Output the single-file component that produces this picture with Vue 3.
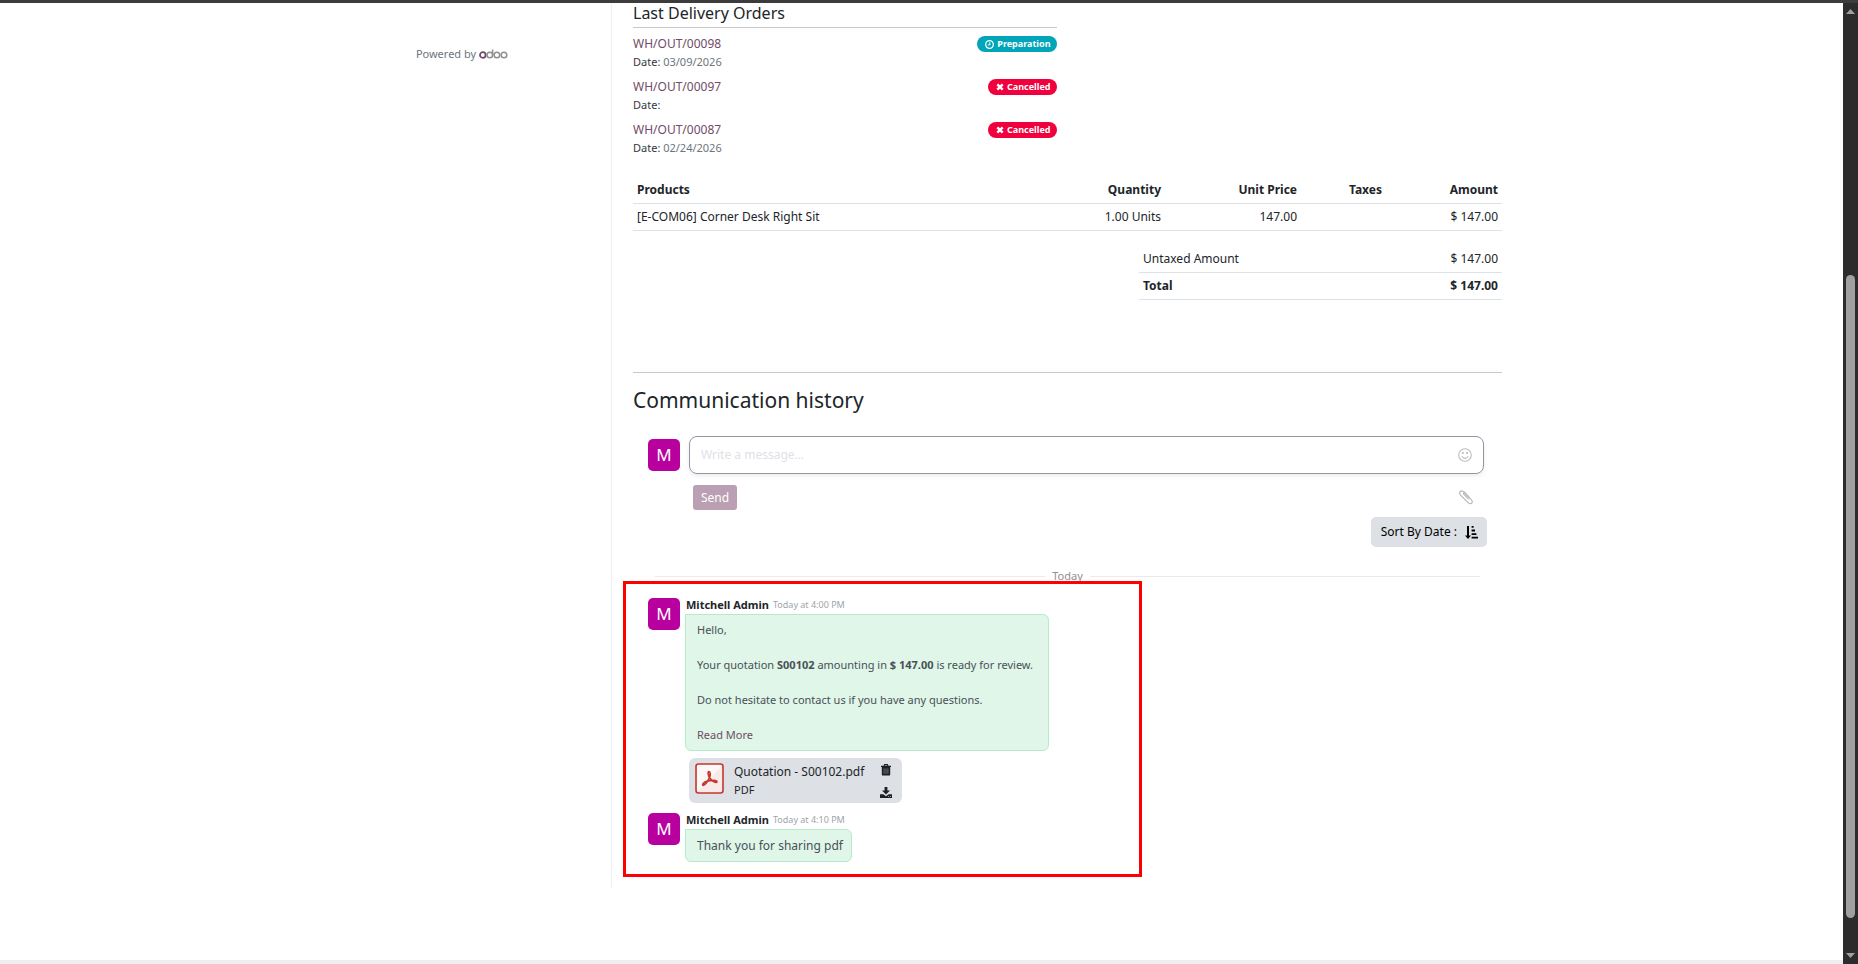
<script setup>
const deliveries = [
  { name: 'WH/OUT/00098', date: '03/09/2026', state: 'Preparation' },
  { name: 'WH/OUT/00097', date: '', state: 'Cancelled' },
  { name: 'WH/OUT/00087', date: '02/24/2026', state: 'Cancelled' },
]
</script>

<template>
  <div class="window">
    <div class="topbar"></div>
    <div class="viewport">
      <div class="page">
        <div class="layout">
          <aside class="sidebar">
            <p class="powered">
              Powered by
              <a href="#" aria-label="Odoo">
                <svg width="29" height="10" viewBox="0 0 29 10" fill="none" stroke-width="1.5">
                  <circle cx="3.8" cy="6" r="2.8" stroke="#714b67" stroke-width="1.8" />
                  <g stroke="#8f8f8f">
                    <circle cx="10.8" cy="6" r="2.8" />
                    <path d="M13.6 0.5V6" />
                    <circle cx="17.9" cy="6" r="2.8" />
                    <circle cx="25" cy="6" r="2.8" />
                  </g>
                </svg>
              </a>
            </p>
          </aside>

          <main class="main">
            <section class="deliveries">
              <h2>Last Delivery Orders</h2>
              <ul>
                <li v-for="d in deliveries" :key="d.name">
                  <div>
                    <a href="#">{{ d.name }}</a>
                    <p>Date: <span>{{ d.date }}</span></p>
                  </div>
                  <span class="badge" :class="d.state === 'Preparation' ? 'info' : 'danger'">
                    <svg v-if="d.state === 'Preparation'" width="9" height="9" viewBox="0 0 9 9" fill="none" stroke="#fff">
                      <circle cx="4.5" cy="4.5" r="3.8" stroke-width="1.3" />
                      <path d="M4.8 2.2V4.9H2.8" />
                    </svg>
                    <svg v-else width="8" height="8" viewBox="0 0 8 8" stroke="#fff" stroke-width="2.4">
                      <path d="M1.3 1.3L6.7 6.7M6.7 1.3L1.3 6.7" />
                    </svg>
                    {{ d.state }}
                  </span>
                </li>
              </ul>
            </section>

            <table class="products">
              <thead>
                <tr><th>Products</th><th class="qty">Quantity</th><th class="price">Unit Price</th><th class="tax">Taxes</th><th class="amount">Amount</th></tr>
              </thead>
              <tbody>
                <tr><td>[E-COM06] Corner Desk Right Sit</td><td>1.00 Units</td><td>147.00</td><td></td><td>$ 147.00</td></tr>
              </tbody>
            </table>

            <table class="totals">
              <tbody>
                <tr><td>Untaxed Amount</td><td>$ 147.00</td></tr>
                <tr><th>Total</th><th>$ 147.00</th></tr>
              </tbody>
            </table>

            <section class="history">
              <h1>Communication history</h1>
              <form class="composer" @submit.prevent>
                <span class="avatar">M</span>
                <div class="field">
                  <input type="text" aria-label="Message" placeholder="Write a message…" />
                  <button type="button" aria-label="Add emoji">
                    <svg width="14" height="14" viewBox="0 0 14 14" fill="none" stroke="#bcbcbc" stroke-width="1.1">
                      <circle cx="7" cy="7" r="6.3" />
                      <path d="M4 8.3Q4.8 10.4 7 10.4T10 8.3" />
                      <circle cx="4.9" cy="5" r="0.5" fill="#bcbcbc" />
                      <circle cx="9.1" cy="5" r="0.5" fill="#bcbcbc" />
                    </svg>
                  </button>
                </div>
              </form>
              <div class="actions">
                <button type="button" class="send">Send</button>
                <button type="button" class="attach" aria-label="Attach files">
                  <svg width="14" height="15" viewBox="0 0 14 15" fill="none" stroke="#b4b4b4" stroke-width="1.1" stroke-linecap="round">
                    <path d="M9.4 8.8L4.7 4.2C3.9 3.4 4.9 2.4 5.8 3.2L12 9.4C13.3 10.7 13.6 12.2 12.7 13.2S10.3 13.9 9.1 12.7L1.8 5.3C0.6 4.1 0.3 2.5 1.3 1.5S4 0.8 5.2 2L10.4 7.3" />
                  </svg>
                </button>
              </div>
              <div class="sort-row">
                <button type="button" class="sort">
                  Sort By Date :
                  <svg width="13" height="13" viewBox="0 0 13 13" fill="#000">
                    <path d="M2 0H4V9.5H6L3 13L0 9.5H2ZM6.6 0H8.6V1.8H6.6ZM6.6 3.6H10V5.4H6.6ZM6.6 7.2H11.4V9H6.6ZM6.6 10.8H13V12.6H6.6Z" />
                  </svg>
                </button>
              </div>
              <div class="day"><span>Today</span></div>

              <div class="thread">
                <div class="highlight"></div>
                <article class="message">
                  <span class="avatar">M</span>
                  <div>
                    <header><strong>Mitchell Admin</strong><time>Today at 4:00 PM</time></header>
                    <div class="bubble">
                      <p>Hello,</p>
                      <p>Your quotation <b>S00102</b> amounting in <b>$ 147.00</b> is ready for review.</p>
                      <p>Do not hesitate to contact us if you have any questions.</p>
                      <p><a href="#">Read More</a></p>
                    </div>
                    <div class="file">
                      <svg width="29" height="31" viewBox="0 0 29 31" fill="none" stroke="#c4382d">
                        <rect x="1" y="1" width="27" height="29" rx="2.5" fill="#f9e9e9" stroke="none" />
                        <path d="M2 29V2H27V3Z" fill="#fdf8f8" stroke="none" />
                        <rect x="1" y="1" width="27" height="29" rx="2.5" stroke-width="1.6" />
                        <path d="M14.5 14.7C12.9 11.5 12.7 8.7 14 8.7S15.8 11.4 14.4 14.7C13 18.2 10 22.4 8.3 22.3S8.4 19.1 12.3 18.1C15.6 17.2 21.8 16.7 21.9 18.5S17.6 19.4 14.5 14.7Z" stroke-width="1.7" />
                      </svg>
                      <div class="file-name"><span>Quotation - S00102.pdf</span><small>PDF</small></div>
                      <div class="file-actions">
                        <button type="button" aria-label="Delete">
                          <svg width="10" height="12" viewBox="0 0 10 12">
                            <path d="M3 2.2L3.6 0.6H6.4L7 2.2" fill="none" stroke="#1d2126" stroke-width="1.1" />
                            <path d="M0 1.8H10V3H9.2V10.4Q9.2 11.6 8 11.6H2Q0.8 11.6 0.8 10.4V3H0Z" fill="#1d2126" />
                            <path d="M3.1 4.4V9.8M5 4.4V9.8M6.9 4.4V9.8" stroke="#8b9096" stroke-width="0.7" />
                          </svg>
                        </button>
                        <button type="button" aria-label="Download">
                          <svg width="12" height="11" viewBox="0 0 12 11" fill="#1d2126">
                            <path d="M4.6 0H7.4V3.4H10L6 7.4L2 3.4H4.6Z" />
                            <path d="M0 7.2H3.4L6 9.2L8.6 7.2H12V11H0Z" />
                            <path d="M8.2 9.2H9.1V10H8.2ZM10 9.2H10.9V10H10Z" fill="#dde1e6" />
                          </svg>
                        </button>
                      </div>
                    </div>
                  </div>
                </article>
                <article class="message">
                  <span class="avatar">M</span>
                  <div>
                    <header><strong>Mitchell Admin</strong><time>Today at 4:10 PM</time></header>
                    <div class="bubble large"><p>Thank you for sharing pdf</p></div>
                  </div>
                </article>
              </div>
            </section>
          </main>
        </div>
        <div class="footer-edge"></div>
      </div>
      <div class="scrollbar">
        <svg width="9" height="5" viewBox="0 0 9 5" fill="#a0a0a0"><path d="M0 5L4.5 0L9 5Z" /></svg>
        <div class="track"><div class="thumb"></div></div>
        <svg width="9" height="5" viewBox="0 0 9 5" fill="#a0a0a0"><path d="M0 0L4.5 5L9 0Z" /></svg>
      </div>
    </div>
  </div>
</template>

<style>
body { margin: 0; background: #fff; }
</style>

<style scoped>
* { box-sizing: border-box; }
h1, h2, p, ul { margin: 0; padding: 0; font-weight: 400; }
ul { list-style: none; }
button { border: 0; background: none; padding: 0; font: inherit; display: flex; align-items: center; }
svg { display: block; flex: none; }
a { color: #714b67; text-decoration: none; }
.window { min-height: 100vh; display: flex; flex-direction: column; font: 12px/20px "Noto Sans", "Open Sans", sans-serif; color: #212529; }
.topbar { height: 3px; background: #3c3c3c; }
.viewport { flex: 1; display: flex; }
.page { flex: 1; display: flex; flex-direction: column; }
.layout { flex: 1; width: 100%; max-width: 1161px; margin: 0 auto; display: grid; grid-template-columns: 270px 1fr; align-content: start; }
.sidebar { padding: 41px 28px 0 0; }
.powered { display: flex; justify-content: center; align-items: center; gap: 3px; font-size: 11px; color: #6c757d; }
.main { border-left: 1px solid #f0f1f3; padding: 0 0 11px 21px; }
.deliveries { width: calc(50% - 11px); }
.deliveries h2 { font-size: 16px; line-height: 20px; padding-bottom: 4px; border-bottom: 1px solid #c8c9ca; }
.deliveries ul { margin-top: 6px; display: flex; flex-direction: column; gap: 7px; }
.deliveries li { display: flex; justify-content: space-between; align-items: flex-start; }
.deliveries li a { display: block; }
.deliveries li p { font-size: 11px; line-height: 16px; color: #343a40; }
.deliveries li p span { color: #6c757d; }
.badge { display: flex; align-items: center; gap: 3px; height: 16px; margin-top: 2px; padding: 0 6px 0 8px; border-radius: 8px; color: #fff; font-size: 9px; font-weight: 700; }
.info { background: #00a5b9; }
.danger { background: #f0003c; }
table { border-collapse: separate; border-spacing: 0; }
th, td { padding: 3px 4px; border-bottom: 1px solid #dee2e6; text-align: right; height: 27px; }
th { font-weight: 700; }
th:first-child, td:first-child { text-align: left; }
.products { width: 100%; margin-top: 21px; table-layout: fixed; }
.qty { width: 136px; }
.price { width: 136px; }
.tax { width: 85px; }
.amount { width: 116px; }
.totals { width: 363px; margin: 15px 0 0 auto; }
.history { margin-top: 72px; border-top: 1px solid #c8c9ca; padding: 13px 18px 0 15px; }
.history h1 { font-size: 21px; line-height: 28px; margin: 0 0 22px -15px; }
.avatar { flex: none; width: 32px; height: 32px; border-radius: 5px; background: #b8009f; color: #fff; font: 17px/32px "Noto Sans", sans-serif; text-align: center; }
.composer { display: flex; align-items: center; gap: 9px; }
.field { flex: 1; height: 38px; display: flex; align-items: center; padding: 0 11px; border: 1px solid #9496a2; border-radius: 8px; box-shadow: 0 2px 4px rgba(0, 0, 0, 0.08); }
.field input { flex: 1; border: 0; outline: 0; padding: 0; background: none; font: inherit; }
.field input::placeholder { color: #dee2e6; }
.actions { display: flex; justify-content: space-between; align-items: center; margin-top: 11px; padding: 0 11px 0 45px; }
.send { height: 25px; padding: 0 8px; border-radius: 3px; background: #bba0b3; color: #fff; }
.sort-row { display: flex; justify-content: flex-end; margin: 7px -3px 0 0; }
.sort { height: 30px; gap: 8px; padding: 0 9px 0 10px; border-radius: 5px; background: #dde1e6; color: #000; }
.day { display: flex; align-items: center; gap: 7px; margin: 21px 4px 0 7px; font-size: 11px; line-height: 16px; color: #8c9196; }
.day::before, .day::after { content: ""; flex: 1; height: 1px; background: #e9ebed; }
.thread { position: relative; padding: 14px 0 15px; }
.highlight { position: absolute; left: -25px; top: -3px; bottom: 0; width: 519px; border: 3px solid #f00; pointer-events: none; }
.message { display: flex; gap: 5px; align-items: flex-start; }
.message + .message { margin-top: 10px; }
.message header { display: flex; align-items: center; gap: 4px; height: 16px; padding: 0 0 2px 1px; font-size: 11px; }
.message time { font-size: 9px; color: #a0a4a8; }
.bubble { width: fit-content; padding: 6px 15px 6px 11px; border: 1px solid #b5ebcb; border-radius: 0 6px 6px 6px; background: #dff6e8; color: #495057; font-size: 11px; line-height: 18px; }
.bubble p + p { margin-top: 17px; }
.bubble.large { padding-right: 8px; font-size: 12px; line-height: 19px; }
.file { width: 213px; height: 45px; margin: 7px 0 0 4px; padding: 0 10px 0 6px; display: flex; align-items: center; border-radius: 6px; background: #dde1e6; }
.file > svg { margin-bottom: 4px; }
.file-name { flex: 1; display: flex; flex-direction: column; padding-left: 10px; line-height: 18px; white-space: nowrap; }
.file-name small { font-size: 11px; }
.file-actions { display: flex; flex-direction: column; align-items: center; gap: 11px; }
.footer-edge { height: 4px; background: #eee; }
.scrollbar { width: 15px; background: #2c2c2c; display: flex; flex-direction: column; align-items: center; padding: 6px 0; }
.track { flex: 1; width: 9px; margin: 5px 0; display: grid; grid-template-rows: 255fr 642fr 30fr; }
.thumb { grid-row: 2; border-radius: 5px; background: #a0a0a0; }
</style>
